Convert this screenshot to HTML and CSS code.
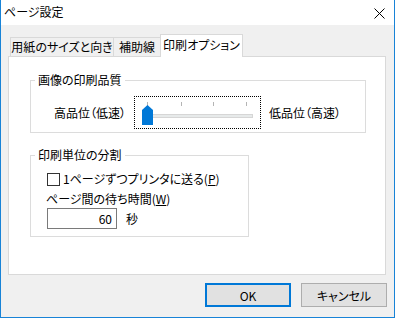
FILE: index.html
```html
<!DOCTYPE html>
<html lang="ja">

<head>
    <meta charset="UTF-8">
    <title>ページ設定</title>
    <link rel="stylesheet" href="styles.css">
</head>

<body>
    <div class="window">
        <div class="titlebar">
            <span class="title">ページ設定</span>
            <svg class="close" width="11" height="11" viewBox="0 0 11 11">
                <path d="M0.5 0.5 L10.5 10.5 M10.5 0.5 L0.5 10.5" stroke="#000" stroke-width="1" fill="none" />
            </svg>
        </div>

        <div class="content">
            <div class="tabs">
                <div class="tab tab-size">用紙のサイズと向き</div>
                <div class="tab tab-guide">補助線</div>
                <div class="tab tab-print active">印刷オプション</div>
            </div>

            <div class="panel">
                <fieldset class="group group-quality">
                    <legend>画像の印刷品質</legend>
                    <div class="quality-row">
                        <span>高品位（低速）</span>
                        <div class="slider">
                            <span class="tick" style="left: 12px"></span>
                            <span class="tick" style="left: 46px"></span>
                            <span class="tick" style="left: 78px"></span>
                            <span class="tick" style="left: 111px"></span>
                            <span class="track"></span>
                            <svg class="thumb" width="11" height="20" viewBox="0 0 11 20">
                                <polygon points="0,5 5.5,0 11,5 11,20 0,20" fill="#0078d7" />
                            </svg>
                        </div>
                        <span>低品位（高速）</span>
                    </div>
                </fieldset>

                <fieldset class="group group-split">
                    <legend>印刷単位の分割</legend>
                    <div class="split-body">
                        <label class="check-row">
                            <span class="checkbox"></span>
                            <span>1ページずつプリンタに送る(<u>P</u>)</span>
                        </label>
                        <div class="wait-label">ページ間の待ち時間(<u>W</u>)</div>
                        <div class="wait-row">
                            <div class="number-input">60</div>
                            <span>秒</span>
                        </div>
                    </div>
                </fieldset>
            </div>

            <div class="buttons">
                <button class="btn btn-default">OK</button>
                <button class="btn">キャンセル</button>
            </div>
        </div>
    </div>
</body>

</html>
```

FILE: styles.css
```css
* {
    box-sizing: border-box;
}

body {
    margin: 0;
    padding: 0;
    font-family: "Noto Sans CJK JP", "Noto Sans", sans-serif;
    font-size: 12px;
    line-height: 16px;
    font-feature-settings: "palt";
    color: #000;
    background: #f0f0f0;
}

.window {
    width: 395px;
    height: 318px;
    border: 1px solid #1883d7;
    border-top: none;
    background: #f0f0f0;
    display: flex;
    flex-direction: column;
}

.titlebar {
    height: 25px;
    background: #fff;
    display: flex;
    align-items: center;
    justify-content: space-between;
    padding: 0 9px 1px 3px;
}

.title {
    font-size: 12px;
}

.close {
    display: block;
    margin-top: 2px;
}

.content {
    padding: 9px 8px 0 7px;
}

/* tabs */
.tabs {
    display: flex;
    align-items: flex-end;
    height: 22px;
    padding-left: 2px;
    position: relative;
    z-index: 1;
}

.tab {
    height: 19px;
    border: 1px solid #d9d9d9;
    border-bottom: none;
    background: #f0f0f0;
    text-align: center;
    line-height: 18px;
}

.tab + .tab {
    margin-left: -1px;
}

.tab-size {
    width: 104px;
}

.tab-guide {
    width: 48px;
}

.tab-print {
    width: 83px;
}

.tab.active {
    height: 23px;
    margin-bottom: -1px;
    background: #fff;
    line-height: 20px;
}

.panel {
    height: 219px;
    border: 1px solid #d9d9d9;
    background: #fff;
    padding: 16px 0 0 21px;
}

/* group boxes */
.group {
    margin: 0;
    padding: 0;
    border: 1px solid #dcdcdc;
    min-width: 0;
}

.group legend {
    margin-left: 4px;
    padding: 0 3px;
    line-height: 14px;
}

.group-quality {
    width: 336px;
}

.quality-row {
    display: flex;
    align-items: center;
    padding: 9px 0 3px 23px;
}

.slider {
    position: relative;
    width: 127px;
    height: 33px;
    margin: 0 8px;
    border: 1px dotted #000;
}

.tick {
    position: absolute;
    top: 5px;
    width: 1px;
    height: 4px;
    background: #b4b4b4;
}

.track {
    position: absolute;
    left: 14px;
    top: 17px;
    width: 104px;
    height: 4px;
    background: #e7eaea;
    border: 1px solid #d6d6d6;
}

.thumb {
    position: absolute;
    left: 7px;
    top: 8px;
}

.group-split {
    width: 219px;
    margin-top: 15px;
}

.split-body {
    padding: 9px 0 7px 15px;
}

.check-row {
    display: flex;
    align-items: center;
    gap: 3px;
    height: 16px;
    margin-left: 1px;
}

.checkbox {
    width: 13px;
    height: 13px;
    border: 1px solid #333;
    background: #fff;
}

.wait-label {
    margin-top: 4px;
    height: 16px;
}

.wait-row {
    display: flex;
    align-items: center;
    gap: 9px;
    margin-top: 1px;
    margin-left: 1px;
}

.number-input {
    width: 70px;
    height: 21px;
    border: 1px solid #7a7a7a;
    text-align: right;
    padding-right: 4px;
    line-height: 19px;
}

/* dialog buttons */
.buttons {
    display: flex;
    justify-content: flex-end;
    gap: 10px;
    margin-top: 8px;
    margin-right: -1px;
}

.btn {
    width: 86px;
    height: 24px;
    border: 1px solid #adadad;
    background: #e1e1e1;
    font-family: inherit;
    font-size: 12px;
    font-feature-settings: "palt";
    padding: 0;
    color: #000;
}

.btn-default {
    border: 2px solid #0078d7;
}
```
